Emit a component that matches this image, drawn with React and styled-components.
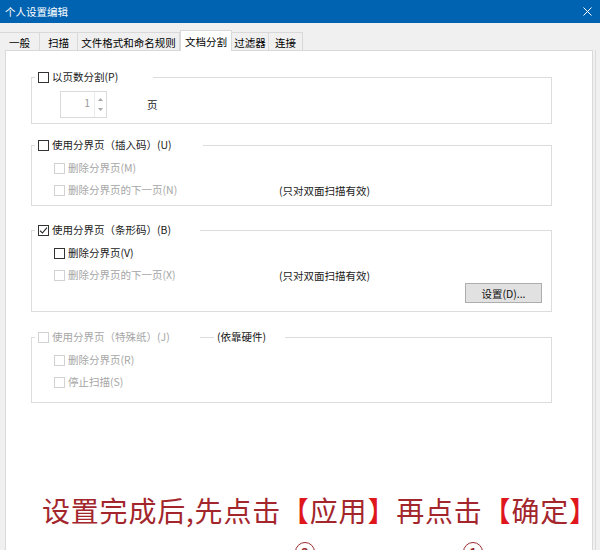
import React from 'react';
import styled, { createGlobalStyle } from 'styled-components';

const GlobalStyle = createGlobalStyle`
  html, body {
    margin: 0;
    padding: 0;
    background: #f0f0f0;
  }
  * {
    box-sizing: border-box;
  }
`;

const Window = styled.div`
  width: 600px;
  height: 550px;
  overflow: hidden;
  display: flex;
  flex-direction: column;
  background: #f0f0f0;
  font-family: "Noto Sans CJK SC", "Noto Sans", sans-serif;
  font-size: 10.5px;
  color: #1a1a1a;
`;

const TitleBar = styled.div`
  height: 23px;
  flex: 0 0 23px;
  display: flex;
  align-items: center;
  justify-content: space-between;
  padding: 0 8px 0 5px;
  background: #0063b1;
  color: #fff;
  font-size: 10.5px;
`;

const TabStrip = styled.div`
  height: 27px;
  flex: 0 0 27px;
  display: flex;
  align-items: flex-end;
  position: relative;
  z-index: 2;
`;

const Tab = styled.div`
  width: ${p => p.$w}px;
  height: ${p => (p.$active ? 21 : 18)}px;
  margin-bottom: ${p => (p.$active ? -1 : 0)}px;
  display: flex;
  align-items: center;
  justify-content: center;
  padding-top: ${p => (p.$active ? 0 : 1)}px;
  background: ${p => (p.$active ? '#fff' : '#f0f0f0')};
  border-top: 1px solid #d9d9d9;
  border-right: 1px solid #d9d9d9;
  border-left: ${p => (p.$active ? '1px solid #d9d9d9' : 'none')};
  color: #000;
  white-space: nowrap;
`;

const Panel = styled.div`
  flex: 1;
  margin: 0 7px 0 5px;
  padding: 19px 0 0 25px;
  display: flex;
  flex-direction: column;
  background: #fff;
  border: 1px solid #d9d9d9;
  border-bottom: none;
  box-shadow: 2px 0 0 #f0f0f0, 3px 0 0 #dcdcdc;
`;

const Group = styled.fieldset`
  width: 521px;
  margin: ${p => p.$mt || 0}px 0 0 0;
  padding: ${p => p.$pt}px 0 ${p => p.$pb}px 0;
  border: 1px solid #dcdcdc;
  min-inline-size: 0;
`;

const Legend = styled.legend`
  margin-left: 3px;
  padding: 0;
  height: 14px;
  display: flex;
  align-items: center;
  background: #fff;
`;

const LegendMain = styled.span`
  width: ${p => p.$w}px;
  height: 14px;
  display: flex;
  align-items: center;
  padding-left: 3px;
`;

const LegendRule = styled.span`
  width: 14px;
  height: 1px;
  margin-right: 3px;
  background: #dcdcdc;
`;

const LegendNote = styled.span`
  padding-right: 19px;
  color: #111;
  line-height: 14px;
`;

const Box = styled.span`
  width: 11px;
  height: 11px;
  flex: 0 0 11px;
  display: flex;
  align-items: center;
  justify-content: center;
  border: 1px solid ${p => (p.$disabled ? '#d2d2d2' : '#333')};
  background: #fff;
`;

const Label = styled.span`
  margin-left: 3px;
  line-height: 14px;
  color: ${p => (p.$disabled ? '#a6a6a6' : '#1a1a1a')};
  white-space: nowrap;
`;

const Row = styled.div`
  height: 22px;
  display: grid;
  grid-template-columns: 225px auto;
  align-items: center;
  padding-left: 22px;
`;

const Check = styled.div`
  display: flex;
  align-items: center;
`;

const Hint = styled.span`
  color: #1a1a1a;
  white-space: nowrap;
`;

const SpinRow = styled.div`
  display: flex;
  align-items: center;
  padding-left: 28px;
`;

const Spin = styled.div`
  width: 47px;
  height: 27px;
  display: flex;
  border: 1px solid #dadada;
  background: #fff;
`;

const SpinValue = styled.div`
  flex: 1;
  display: flex;
  justify-content: flex-end;
  padding: 3px 4px 0 0;
  color: #9a9a9a;
`;

const SpinArrows = styled.div`
  width: 12px;
  display: flex;
  flex-direction: column;
  justify-content: space-around;
  align-items: center;
  border-left: 1px solid #ececec;
  padding: 3px 0;
`;

const Unit = styled.span`
  margin-left: 40px;
  color: #1a1a1a;
`;

const ButtonRow = styled.div`
  display: flex;
  justify-content: flex-end;
  margin-top: -3px;
  padding-right: 9px;
`;

const Button = styled.div`
  width: 77px;
  height: 20px;
  display: flex;
  align-items: center;
  justify-content: center;
  background: #e1e1e1;
  border: 1px solid #adadad;
  color: #111;
`;

const Note = styled.div`
  margin: 91px 0 0 11px;
  font-size: 28px;
  line-height: 32px;
  font-weight: 400;
  color: #a3262c;
  white-space: nowrap;
  letter-spacing: 0.8px;
`;

const Bracket = styled.span`
  color: #e0161d;
`;

const Marks = styled.div`
  display: flex;
  margin-top: 16px;
  padding-left: 264px;
  gap: 148px;
`;

const Mark = styled.span`
  width: 20px;
  height: 20px;
  border: 1.5px solid #9b2d30;
  border-radius: 50%;
  display: flex;
  align-items: center;
  justify-content: center;
  color: #9b2d30;
  font-size: 13px;
  font-weight: 700;
`;

const CheckMark = () => (
  <svg width="9" height="9" viewBox="0 0 9 9">
    <polyline points="1,4.6 3.4,7 8,1.6" fill="none" stroke="#222" strokeWidth="1.1" />
  </svg>
);

const CheckBox = ({ label, disabled, checked }) => (
  <Check>
    <Box $disabled={disabled}>{checked && <CheckMark />}</Box>
    <Label $disabled={disabled}>{label}</Label>
  </Check>
);

const Arrow = ({ up }) => (
  <svg width="5" height="3" viewBox="0 0 5 3">
    <polygon points={up ? '0,3 5,3 2.5,0' : '0,0 5,0 2.5,3'} fill="#a8a8a8" />
  </svg>
);

const tabs = [
  { name: '一般', w: 40 },
  { name: '扫描', w: 38 },
  { name: '文件格式和命名规则', w: 102 },
  { name: '文档分割', w: 52, active: true },
  { name: '过滤器', w: 37 },
  { name: '连接', w: 34 },
];

function App() {
  return (
    <>
      <GlobalStyle />
      <Window>
        <TitleBar>
          <span>个人设置编辑</span>
          <svg width="9" height="9" viewBox="0 0 9 9">
            <path d="M0.5 0.5 L8.5 8.5 M8.5 0.5 L0.5 8.5" stroke="#fff" strokeWidth="1" />
          </svg>
        </TitleBar>

        <TabStrip>
          {tabs.map(t => (
            <Tab key={t.name} $w={t.w} $active={t.active}>{t.name}</Tab>
          ))}
        </TabStrip>

        <Panel>
          <Group $pt={7} $pb={5}>
            <Legend>
              <LegendMain $w={118}>
                <CheckBox label="以页数分割(P)" />
              </LegendMain>
            </Legend>
            <SpinRow>
              <Spin>
                <SpinValue>1</SpinValue>
                <SpinArrows>
                  <Arrow up />
                  <Arrow />
                </SpinArrows>
              </Spin>
              <Unit>页</Unit>
            </SpinRow>
          </Group>

          <Group $mt={14} $pt={5} $pb={4}>
            <Legend>
              <LegendMain $w={168}>
                <CheckBox label="使用分界页（插入码）(U)" />
              </LegendMain>
            </Legend>
            <Row>
              <CheckBox label="删除分界页(M)" disabled />
            </Row>
            <Row>
              <CheckBox label="删除分界页的下一页(N)" disabled />
              <Hint>(只对双面扫描有效)</Hint>
            </Row>
          </Group>

          <Group $mt={17} $pt={5} $pb={8}>
            <Legend>
              <LegendMain $w={165}>
                <CheckBox label="使用分界页（条形码）(B)" checked />
              </LegendMain>
            </Legend>
            <Row>
              <CheckBox label="删除分界页(V)" />
            </Row>
            <Row>
              <CheckBox label="删除分界页的下一页(X)" disabled />
              <Hint>(只对双面扫描有效)</Hint>
            </Row>
            <ButtonRow>
              <Button>设置(D)...</Button>
            </ButtonRow>
          </Group>

          <Group $mt={18} $pt={5} $pb={9}>
            <Legend>
              <LegendMain $w={165}>
                <CheckBox label="使用分界页（特殊纸）(J)" disabled />
              </LegendMain>
              <LegendRule />
              <LegendNote>(依靠硬件)</LegendNote>
            </Legend>
            <Row>
              <CheckBox label="删除分界页(R)" disabled />
            </Row>
            <Row>
              <CheckBox label="停止扫描(S)" disabled />
            </Row>
          </Group>

          <Note>
            设置完成后,先点击<Bracket>【</Bracket>应用<Bracket>】</Bracket>再点击<Bracket>【</Bracket>确定<Bracket>】</Bracket>
          </Note>
          <Marks>
            <Mark>2</Mark>
            <Mark>1</Mark>
          </Marks>
        </Panel>
      </Window>
    </>
  );
}

export default App;
